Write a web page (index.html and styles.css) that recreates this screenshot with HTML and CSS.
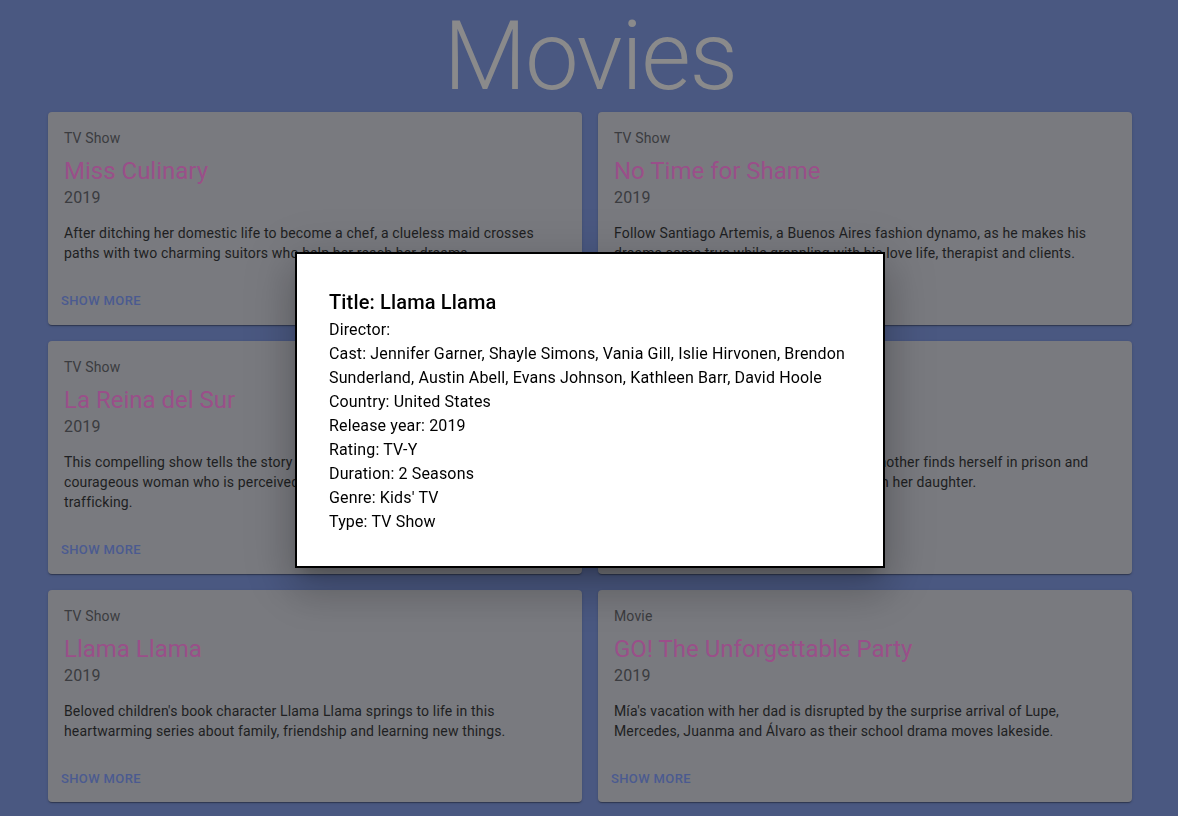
FILE: index.html
```html
<!DOCTYPE html>
<html lang="en">
<head>
<meta charset="utf-8">
<title>Movies</title>
<link rel="stylesheet" href="styles.css">
</head>
<body>
<main class="page">
  <h1 class="page-title">Movies</h1>
  <section class="grid">
    <article class="card">
      <div class="card-content">
        <p class="card-type">TV Show</p>
        <h2 class="card-title">Miss Culinary</h2>
        <p class="card-year">2019</p>
        <p class="card-desc">After ditching her domestic life to become a chef, a clueless maid crosses paths with two charming suitors who help her reach her dreams.</p>
      </div>
      <div class="card-actions"><button class="btn">Show more</button></div>
    </article>
    <article class="card">
      <div class="card-content">
        <p class="card-type">TV Show</p>
        <h2 class="card-title">No Time for Shame</h2>
        <p class="card-year">2019</p>
        <p class="card-desc">Follow Santiago Artemis, a Buenos Aires fashion dynamo, as he makes his dreams come true while grappling with his love life, therapist and clients.</p>
      </div>
      <div class="card-actions"><button class="btn">Show more</button></div>
    </article>
    <article class="card">
      <div class="card-content">
        <p class="card-type">TV Show</p>
        <h2 class="card-title">La Reina del Sur</h2>
        <p class="card-year">2019</p>
        <p class="card-desc">This compelling show tells the story of Teresa Mendoza, a young and courageous woman who is perceived as the queen of international drug trafficking.</p>
      </div>
      <div class="card-actions"><button class="btn">Show more</button></div>
    </article>
    <article class="card">
      <div class="card-content">
        <p class="card-type">TV Show</p>
        <h2 class="card-title">Yo soy Franky</h2>
        <p class="card-year">2019</p>
        <p class="card-desc">After a shocking betrayal, a young single mother finds herself in prison and must battle hard to survive and reunite with her daughter.</p>
      </div>
      <div class="card-actions"><button class="btn">Show more</button></div>
    </article>
    <article class="card">
      <div class="card-content">
        <p class="card-type">TV Show</p>
        <h2 class="card-title">Llama Llama</h2>
        <p class="card-year">2019</p>
        <p class="card-desc">Beloved children's book character Llama Llama springs to life in this heartwarming series about family, friendship and learning new things.</p>
      </div>
      <div class="card-actions"><button class="btn">Show more</button></div>
    </article>
    <article class="card">
      <div class="card-content">
        <p class="card-type">Movie</p>
        <h2 class="card-title">GO! The Unforgettable Party</h2>
        <p class="card-year">2019</p>
        <p class="card-desc">Mía's vacation with her dad is disrupted by the surprise arrival of Lupe, Mercedes, Juanma and Álvaro as their school drama moves lakeside.</p>
      </div>
      <div class="card-actions"><button class="btn">Show more</button></div>
    </article>
  </section>
</main>

<div class="backdrop"></div>
<div class="modal" role="dialog">
  <h2 class="modal-title">Title: Llama Llama</h2>
  <p class="modal-line">Director: </p>
  <p class="modal-line">Cast: Jennifer Garner, Shayle Simons, Vania Gill, Islie Hirvonen, Brendon Sunderland, Austin Abell, Evans Johnson, Kathleen Barr, David Hoole</p>
  <p class="modal-line">Country: United States</p>
  <p class="modal-line">Release year: 2019</p>
  <p class="modal-line">Rating: TV-Y</p>
  <p class="modal-line">Duration: 2 Seasons</p>
  <p class="modal-line">Genre: Kids' TV</p>
  <p class="modal-line">Type: TV Show</p>
</div>
</body>
</html>
```

FILE: styles.css
```css
* {
  box-sizing: border-box;
}

html, body {
  margin: 0;
  padding: 0;
}

body {
  background: #4a5881;
  font-family: Roboto, "Liberation Sans", Arial, sans-serif;
  min-height: 816px;
}

.page {
  padding: 0 46px 24px 48px;
}

.page-title {
  margin: 0;
  text-align: center;
  font-size: 96px;
  font-weight: 300;
  line-height: 112px;
  letter-spacing: -0.01562em;
  color: #8a8a8b;
}

.grid {
  display: grid;
  grid-template-columns: 1fr 1fr;
  gap: 16px;
}

.card {
  display: flex;
  flex-direction: column;
  background: #797a7f;
  border-radius: 4px;
  box-shadow: 0 2px 1px -1px rgba(0,0,0,0.2), 0 1px 1px 0 rgba(0,0,0,0.14), 0 1px 3px 0 rgba(0,0,0,0.12);
}

.card-content {
  padding: 16px 16px 15px;
}

.card-type {
  margin: 0 0 6px;
  font-size: 14px;
  line-height: 20px;
  letter-spacing: 0.01071em;
  color: #3b3c40;
}

.card-title {
  margin: 0;
  padding-top: 1px;
  font-size: 24px;
  font-weight: 400;
  line-height: 32px;
  color: #9a4f89;
}

.card-year {
  margin: -1px 0 13px;
  font-size: 16px;
  line-height: 24px;
  letter-spacing: 0.00938em;
  color: #3b3c40;
}

.card-desc {
  margin: 0;
  font-size: 14px;
  line-height: 20px;
  letter-spacing: 0.01071em;
  color: #1e1f22;
}

.card-actions {
  margin-top: auto;
  padding: 8px;
  display: flex;
}

.btn {
  border: 0;
  background: transparent;
  padding: 4px 5px;
  font-family: inherit;
  font-size: 13px;
  font-weight: 500;
  line-height: 22.75px;
  letter-spacing: 0.02857em;
  text-transform: uppercase;
  color: #4b5a90;
  cursor: pointer;
}

.backdrop {
  position: fixed;
  inset: 0;
  background: transparent;
}

.modal {
  position: fixed;
  top: 252px;
  left: 295px;
  width: 590px;
  padding: 32px;
  background: #fff;
  border: 2px solid #000;
  color: #000;
  box-shadow: 0 11px 15px -7px rgba(0,0,0,0.2), 0 24px 38px 3px rgba(0,0,0,0.14), 0 9px 46px 8px rgba(0,0,0,0.12);
}

.modal-title {
  margin: 0;
  font-size: 20px;
  font-weight: 500;
  line-height: 32px;
  letter-spacing: 0.0075em;
}

.modal-line {
  margin: 0;
  font-size: 16px;
  line-height: 24px;
  letter-spacing: 0.00938em;
}
```
